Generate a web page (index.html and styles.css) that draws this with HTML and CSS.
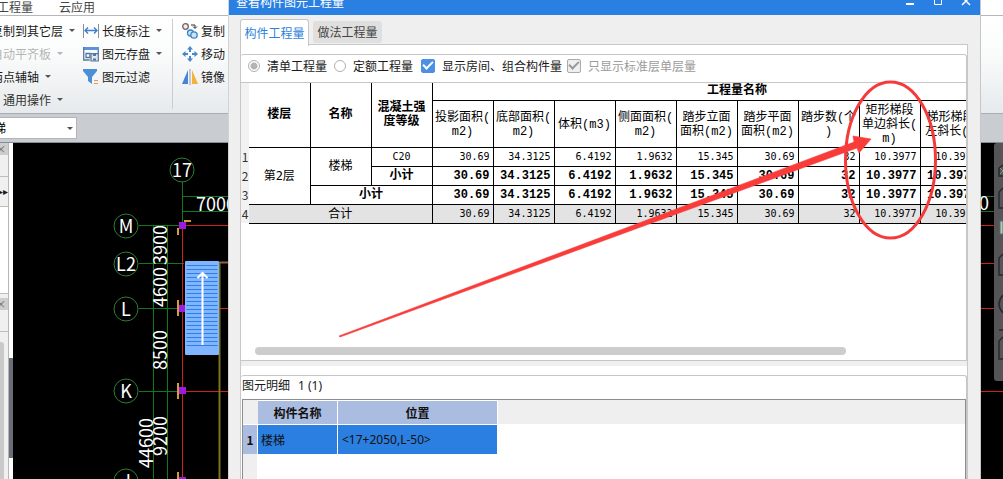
FILE: index.html
```
<!DOCTYPE html>
<html lang="zh-CN">
<head>
<meta charset="utf-8">
<title>查看构件图元工程量</title>
<link rel="stylesheet" href="styles.css">
</head>
<body>
<div class="app">
  <nav class="menubar">
    <a href="#">工程量</a>
    <a href="#">云应用</a>
  </nav>
  <div class="ribbon">
    <div class="group group-general">
      <button class="cmd">复制到其它层<i class="caret"></i></button>
      <button class="cmd" disabled>自动平齐板<i class="caret"></i></button>
      <button class="cmd">两点辅轴<i class="caret"></i></button>
      <button class="cmd group-name">通用操作<i class="caret"></i></button>
    </div>
    <div class="group group-tools">
      <button class="cmd"><svg class="icon" viewBox="0 0 16 16"><path d="M.5 1v14M15.500 1v14" stroke="#8a9099"/><path d="M2 7.500h12M5 4.500l-3 3 3 3M11 4.500l3 3-3 3" fill="none" stroke="#3f7fd0" stroke-width="1.400"/></svg>长度标注<i class="caret"></i></button>
      <button class="cmd"><svg class="icon" viewBox="0 0 16 16"><path d="M0 1h16v3H0z" fill="#5a93dc"/><path d="M.7 1v13h6M15.300 4v4M3 7.500h4v4H3z" fill="none" stroke="#56789f" stroke-width="1.300"/><path d="M8 7.700h7.300v7.300H8z" fill="#dfe9f5" stroke="#56789f" stroke-width="1.200"/><path d="M10 8h3v2h-3zM10 12.500h3v2h-3z" fill="#56789f"/></svg>图元存盘<i class="caret"></i></button>
      <button class="cmd"><svg class="icon" viewBox="0 0 16 16"><path d="M0 0h14v2L9 8v7l-4-3V8L0 2z" fill="#4b8fd9"/><path d="M11 11.500h4M11 14.500h4" stroke="#e79a5c" stroke-width="1.200"/></svg>图元过滤</button>
    </div>
    <div class="group group-edit">
      <button class="cmd"><svg class="icon" viewBox="0 0 16 16"><circle cx="3.500" cy="3.500" r="2.800" fill="#eee" stroke="#765d68" stroke-width="1.300"/><circle cx="8.500" cy="10" r="3" fill="#c9e3f6" stroke="#3b83c4" stroke-width="1.300"/><circle cx="12" cy="12" r="3.200" fill="#c9e3f6" stroke="#3b83c4" stroke-width="1.300"/><path d="M9 2h4v3M11 3.500l2 2 2-2" fill="none" stroke="#333"/></svg>复制</button>
      <button class="cmd"><svg class="icon" viewBox="0 0 16 16"><path d="M8 0l3 3.500H9V6H7V3.500H5zM8 16l3-3.500H9V10H7v2.500H5zM0 8l3.500-3v2H6v2H3.500v2zM16 8l-3.500-3v2H10v2h2.500v2z" fill="#4b87cf"/></svg>移动</button>
      <button class="cmd"><svg class="icon" viewBox="0 0 16 16"><path d="M6 1v14H0z" fill="#4585d6"/><path d="M8 0v16" stroke="#999"/><path d="M10 1v14h6z" fill="#f0b43a"/></svg>镜像</button>
    </div>
  </div>
  <div class="strip">
    <select class="picker" aria-label="构件类型"><option>楼梯</option></select>
    <i class="caret"></i>
  </div>
  <div class="workspace">
    <aside class="side">
      <div class="side-head">×</div>
      <div class="side-row"></div>
      <div class="side-row side-more">▸▸</div>
      <div class="side-list"></div>
      <div class="side-head side-head-second">×</div>
      <div class="side-row"></div>
      <div class="side-scroll"></div>
    </aside>
    <div class="splitter"><div class="splitter-grip"></div></div>
    <svg class="drawing" width="990" height="336" viewBox="13 143 990 336">
      <g class="axis">
        <path d="M182.500 182v44M182 196.500h46M182 211.500h46M139 225.500h43M139 263.500h45M139 308.500h43M139 391.500h43M153.500 226v253M167.500 226v253"/>
        <path d="M981 196.500h13M981 211.500h13"/>
      </g>
      <g class="bubble">
        <circle cx="182" cy="170" r="12"/><circle cx="126" cy="226" r="12"/><circle cx="126" cy="264" r="12"/>
        <circle cx="126" cy="309" r="12"/><circle cx="126" cy="391" r="12"/><circle cx="126" cy="481" r="12"/>
      </g>
      <path class="wall" d="M182.500 226v253M182 225.500h46M219 308.500h9M182 391.500h46M981 225.500h13M981 263.500h13M981 308.500h13M981 391.500h22"/>
      <path d="M219.500 262v217" stroke="#7d7420" stroke-width="2"/>
      <path d="M219 262.500h9" stroke="#8e6340" stroke-width="2"/>
      <g fill="#9c1be0"><path d="M179 222h7v7h-7zM179 305h7v7h-7zM179 387h7v7h-7zM179 477h7v2h-7z"/></g>
      <path d="M184 221h7M178 228v7M178 300v16M178 383v16M178 472v7" stroke="#d99a3b" stroke-width="2"/>
      <rect x="185" y="261" width="34" height="94" rx="1" fill="#80b5ff"/>
      <path d="M202 265v84" stroke="#2f7de6" stroke-width="31" stroke-dasharray="1 3"/>
      <path d="M202.500 345v-72M197.500 278l5-5 5 5" fill="none" stroke="#fff" stroke-width="2"/>
      <g class="label">
        <text x="182" y="177">17</text><text x="126" y="233">M</text><text x="126" y="271">L2</text>
        <text x="126" y="316">L</text><text x="126" y="398">K</text><text x="126" y="488">J</text>
        <text x="216" y="211">7000</text><text x="984" y="210">0</text>
        <text transform="translate(167 245) rotate(-90)">3900</text>
        <text transform="translate(167 287) rotate(-90)">4600</text>
        <text transform="translate(167 350) rotate(-90)">8500</text>
        <text transform="translate(167 436) rotate(-90)">9200</text>
        <text transform="translate(153 443) rotate(-90)">44600</text>
      </g>
      <rect x="994" y="143" width="14" height="238" rx="3" fill="#555557"/>
      <g fill="none" stroke="#25292f" stroke-width="1.500">
        <path d="M1003 165l-4 3v8h4M1003 188l-4 4v16h4M1003 254l-4 4v17h4M1003 295q-8 9 0 18M999 330h4M1003 337l-4 4v18h4"/>
      </g>
      <path d="M1000 221h3v13h-3z" fill="#b8cfa0" stroke="#4b6e8a"/>
      <path d="M1000 168l3 3-3 3" fill="none" stroke="#67a86c"/>
    </svg>
  </div>
</div>

<section class="dialog">
  <header class="titlebar">
    <span class="title">查看构件图元工程量</span>
    <button class="winbtn" aria-label="最小化"><svg viewBox="0 0 10 10"><path d="M1 7h8" stroke-width="2"/></svg></button>
    <button class="winbtn" aria-label="最大化"><svg viewBox="0 0 10 10"><path d="M1.500 .5h7v7h-7z"/></svg></button>
    <button class="winbtn" aria-label="关闭"><svg viewBox="0 0 10 10"><path d="M1 0l8 8M9 0L1 8" stroke-width="1.500"/></svg></button>
  </header>
  <div class="dialog-body">
    <div class="tabs">
      <button class="tab tab-active">构件工程量</button>
      <button class="tab">做法工程量</button>
    </div>
    <div class="pane">
      <div class="frame summary">
        <div class="options">
          <input type="radio" class="radio" name="kind" id="k1" checked><label for="k1">清单工程量</label>
          <input type="radio" class="radio radio-second" name="kind" id="k2"><label for="k2">定额工程量</label>
          <input type="checkbox" class="check" id="c1" checked><label for="c1">显示房间、组合构件量</label>
          <input type="checkbox" class="check check-off" id="c2" checked disabled><label for="c2" class="muted">只显示标准层单层量</label>
        </div>
        <div class="table-wrap">
          <table class="quantities">
            <colgroup><col class="col-no"><col span="13"></colgroup>
            <thead>
              <tr class="head-top"><th class="no"></th><th rowspan="2">楼层</th><th rowspan="2">名称</th><th rowspan="2">混凝土强<br>度等级</th><th colspan="10">工程量名称</th></tr>
              <tr class="head-sub"><th class="no"></th><td>投影面积(<br>m2)</td><td>底部面积(<br>m2)</td><td>体积(m3)</td><td>侧面面积(<br>m2)</td><td>踏步立面<br>面积(m2)</td><td>踏步平面<br>面积(m2)</td><td>踏步数(个<br>)</td><td>矩形梯段<br>单边斜长(<br>m)</td><td>梯形梯段<br>左斜长(m</td><td></td></tr>
            </thead>
            <tbody>
              <tr><th class="no">1</th><td class="name" rowspan="3">第2层</td><td class="name" rowspan="2">楼梯</td><td class="name code">C20</td><td>30.69</td><td>34.3125</td><td>6.4192</td><td>1.9632</td><td>15.345</td><td>30.69</td><td>32</td><td>10.3977</td><td>10.3977</td><td></td></tr>
              <tr class="strong"><th class="no">2</th><td class="name">小计</td><td>30.69</td><td>34.3125</td><td>6.4192</td><td>1.9632</td><td>15.345</td><td>30.69</td><td>32</td><td>10.3977</td><td>10.3977</td><td></td></tr>
              <tr class="strong"><th class="no">3</th><td class="name" colspan="2">小计</td><td>30.69</td><td>34.3125</td><td>6.4192</td><td>1.9632</td><td>15.345</td><td>30.69</td><td>32</td><td>10.3977</td><td>10.3977</td><td></td></tr>
              <tr class="total"><th class="no">4</th><td class="name" colspan="3">合计</td><td>30.69</td><td>34.3125</td><td>6.4192</td><td>1.9632</td><td>15.345</td><td>30.69</td><td>32</td><td>10.3977</td><td>10.3977</td><td></td></tr>
            </tbody>
          </table>
        </div>
        <div class="hscroll"><div class="hthumb"></div></div>
      </div>
      <div class="divider"></div>
      <div class="frame detail">
        <h2 class="detail-title">图元明细<span>1 (1)</span></h2>
        <div class="detail-grid">
          <table class="elements">
            <thead><tr><th class="corner"></th><th class="col-name">构件名称</th><th class="col-pos">位置</th><th class="rest"></th></tr></thead>
            <tbody><tr><th class="index">1</th><td>楼梯</td><td class="position">&lt;17+2050,L-50&gt;</td><td class="blank"></td></tr></tbody>
          </table>
          <div class="gutter"></div>
        </div>
      </div>
    </div>
  </div>
  <svg class="markup" width="752" height="479" viewBox="228 0 752 479">
    <ellipse cx="890.500" cy="160" rx="45" ry="78" fill="none" stroke="#f43b3b" stroke-width="3"/>
    <path d="M339 336l515-194-1-6 18 3-12 14-2-5L340 337z" fill="#f93c3a" stroke="#f93c3a" stroke-width=".6"/>
  </svg>
</section>
</body>
</html>
```
FILE: styles.css
```
* { box-sizing: border-box; }
html, body { height: 100%; }
body {
  margin: 0;
  overflow: hidden;
  position: relative;
  font: 12px/16px "Noto Sans CJK SC", sans-serif;
  color: #1a1a1a;
}
button { border: 0; padding: 0; background: none; font: inherit; color: inherit; white-space: nowrap; }

/* main window */
.app { display: flex; flex-direction: column; height: 100%; }
.menubar { display: flex; gap: 26px; height: 16px; line-height: 13px; margin-left: -3px; border-bottom: 1px solid #b4b8bd; background: #fff; }
.menubar a { color: #444; text-decoration: none; }
.ribbon { display: flex; height: 98px; padding-top: 3px; background: linear-gradient(#fff, #fafbfb 40%, #e6eaec); border-bottom: 1px solid #a9adb3; }
.group { display: flex; flex-direction: column; }
.group-general { width: 92px; margin-left: -9px; }
.group-tools { width: 90px; margin-bottom: 4px; border-right: 1px solid #c9cdd1; }
.group-edit { padding-left: 9px; }
.cmd { display: flex; align-items: center; height: 23px; color: #1a1a1a; }
.cmd:disabled { color: #b5b5b5; }
.group-name { padding-left: 12px; color: #333; }
.icon { width: 16px; height: 16px; margin-right: 3px; }
.caret { margin-left: 6px; border: 3px solid transparent; border-top-color: #555; border-bottom: 0; }
.cmd:disabled .caret { border-top-color: #b5b5b5; }
.strip { display: flex; align-items: center; height: 29px; background: #c9ccd0; border-bottom: 1px solid #898d96; }
.picker { appearance: none; width: 101px; height: 22px; margin-left: -24px; padding: 0 5px; border: 1px solid #b1b4b8; border-radius: 0; background: #fff; font: inherit; }
.strip .caret { margin-left: -10px; }
.workspace { display: flex; flex: 1; min-height: 0; overflow: hidden; background: #000; }
.side { display: flex; flex-direction: column; flex: none; width: 9px; background: #f0f0f0; border-right: 1px solid #b5b5b5; overflow: hidden; }
.side-head { height: 12px; line-height: 11px; background: #cdcdcd; color: #666; font-size: 10px; text-indent: -4px; }
.side-row { height: 22px; border-bottom: 1px solid #bdbdbd; flex: none; }
.side-more { height: 30px; line-height: 28px; font-size: 10px; text-indent: -2px; }
.side-list { height: 87px; background: #fff; border-bottom: 1px solid #bdbdbd; }
.side-head-second { margin-top: 4px; }
.side-scroll { flex: 1; margin: 10px 4px 0 0; background: #c9c9c9; border-radius: 0 3px 0 0; }
.splitter { display: flex; flex: none; align-items: center; width: 4px; padding-top: 194px; background: #fff; }
.splitter-grip { width: 4px; height: 100px; background: #686d7a; }
.drawing { flex: none; background: #000; }
.axis { fill: none; stroke: #11781d; }
.bubble { fill: none; stroke: #2d7c35; }
.wall { fill: none; stroke: #d02020; }
.label { fill: #fff; text-anchor: middle; font: 18px "Noto Sans CJK SC", sans-serif; }

/* dialog */
.dialog { position: absolute; top: -11px; left: 228px; right: 22px; bottom: 0; display: flex; flex-direction: column; background: #efefef; border-left: 1px solid #d2d2d2; border-right: 1px solid #c6c6c6; }
.titlebar { display: flex; align-items: center; height: 26px; padding: 0 0 0 7px; background: #2a7fe3; color: #fff; }
.title { flex: 1; }
.winbtn { width: 28px; height: 20px; }
.winbtn svg { display: block; width: 10px; height: 10px; margin: auto; fill: none; stroke: #fff; }
.dialog-body { display: flex; flex: 1; flex-direction: column; min-height: 0; padding: 4px 12px 0 11px; }
.tabs { display: flex; align-items: center; gap: 4px; height: 26px; }
.tab { width: 69px; height: 22px; background: #dfdfdf; border-radius: 3px; color: #444; }
.tab-active { position: relative; z-index: 1; height: 27px; background: #fff; border: 1px solid #c6c6c6; border-bottom: 0; border-radius: 3px 3px 0 0; color: #2d7fdb; }
.pane { display: flex; flex: 1; flex-direction: column; min-height: 0; padding-top: 9px; margin-top: -1px; background: #fff; border: 1px solid #c8c8c8; border-bottom: 0; }
.frame { border: 1px solid #c6c6c6; border-width: 1px 1px 1px 0; border-radius: 3px 3px 0 0; }
.summary { display: flex; flex: 1; flex-direction: column; min-height: 0; }
.options { display: flex; align-items: center; height: 28px; padding: 0 0 6px 7px; border-bottom: 1px solid #c6c6c6; white-space: nowrap; }
.radio { appearance: none; width: 12px; height: 12px; margin: 0 7px 0 0; border: 1px solid #b0b0b0; border-radius: 50%; background: #fff; }
.radio:checked { background: radial-gradient(circle, #b4b4b4 0 3px, #fff 4px); }
.radio-second { margin-left: 7px; }
.check { appearance: none; width: 14px; height: 14px; margin: 0 7px 0 8px; border: 1px solid #4b90e4; border-radius: 2px; background: #4b90e4; display: grid; place-items: center; }
.check::before { content: ""; width: 8px; height: 4px; border: solid #fff; border-width: 0 0 2px 2px; rotate: -45deg; margin-bottom: 3px; }
.check-off { margin-left: 5px; background: #efefef; border-color: #aaa; }
.check-off::before { border-color: #999; }
.muted { color: #9b9b9b; }
.table-wrap { overflow: hidden; }
.quantities { width: 801px; table-layout: fixed; border-collapse: collapse; font: 12px/14px "Liberation Mono", "Noto Sans CJK SC", monospace; color: #000; }
.quantities col { width: 61px; }
.quantities .col-no { width: 8px; }
.quantities th, .quantities td { height: 19px; padding: 0; border: 1px solid #000; white-space: nowrap; }
.quantities tbody td { padding-right: 3px; text-align: right; font: 10px/14px "DejaVu Sans Mono", "Noto Sans CJK SC", monospace; }
.quantities tbody td.name { padding: 0; text-align: center; font-size: 12px; }
.quantities tbody td.code { font-size: 10px; }
.quantities .strong td, .quantities .strong td.name { font: bold 12px/14px "Liberation Mono", "Noto Sans CJK SC", monospace; }
.quantities tr > th.no { border: 0; background: #f2f2f2; font: 12px/14px "Noto Sans CJK SC", sans-serif; color: #333; }
.quantities .head-top th { height: 17px; border-top: 0; }
.quantities .head-sub td { height: 47px; padding-top: 2px; text-align: center; }
.quantities .name[rowspan="3"], .quantities .head-top th:nth-child(2), .quantities .total td:nth-child(2) { border-left: 0; }
.total td { background: #e3e3e3; }
.hscroll { margin-top: auto; padding: 0 120px 5px 14px; }
.hthumb { height: 8px; background: #cdcdcd; border-radius: 4px; }
.divider { height: 5px; margin-bottom: 9px; background: #efefef; flex: none; }
.detail { display: flex; flex: 0 0 104px; flex-direction: column; border-bottom: 0; }
.detail-title { height: 23px; margin: 0; padding-left: 1px; font: 12px/17px "Noto Sans CJK SC", sans-serif; }
.detail-title span { margin-left: 8px; font-family: "Noto Sans", sans-serif; }
.detail-grid { display: flex; flex: 1; flex-direction: column; margin-left: 1px; border: 1px solid #8d8d8d; border-bottom: 0; }
.elements { width: 100%; table-layout: fixed; border-collapse: separate; border-spacing: 0; color: #111; }
.elements th, .elements td { padding: 0 3px; border: solid #fff; border-width: 1px 1px 0 0; text-align: left; }
.elements th { height: 24px; text-align: center; background: #aabce0; }
.elements td { height: 30px; background: #2a7fe0; }
.elements td.position { padding-left: 4px; font-family: "Noto Sans", sans-serif; }
.elements th.corner, .elements th.rest { background: #efefef; border: 0; }
.elements .corner { width: 15px; }
.elements .col-name { width: 80px; }
.elements .col-pos { width: 160px; }
.elements td.blank { background: #fff; }
.elements th.index { padding: 0; }
.gutter { flex: 1; width: 14px; background: #efefef; }
.markup { position: absolute; left: -1px; top: 11px; pointer-events: none; }
```
